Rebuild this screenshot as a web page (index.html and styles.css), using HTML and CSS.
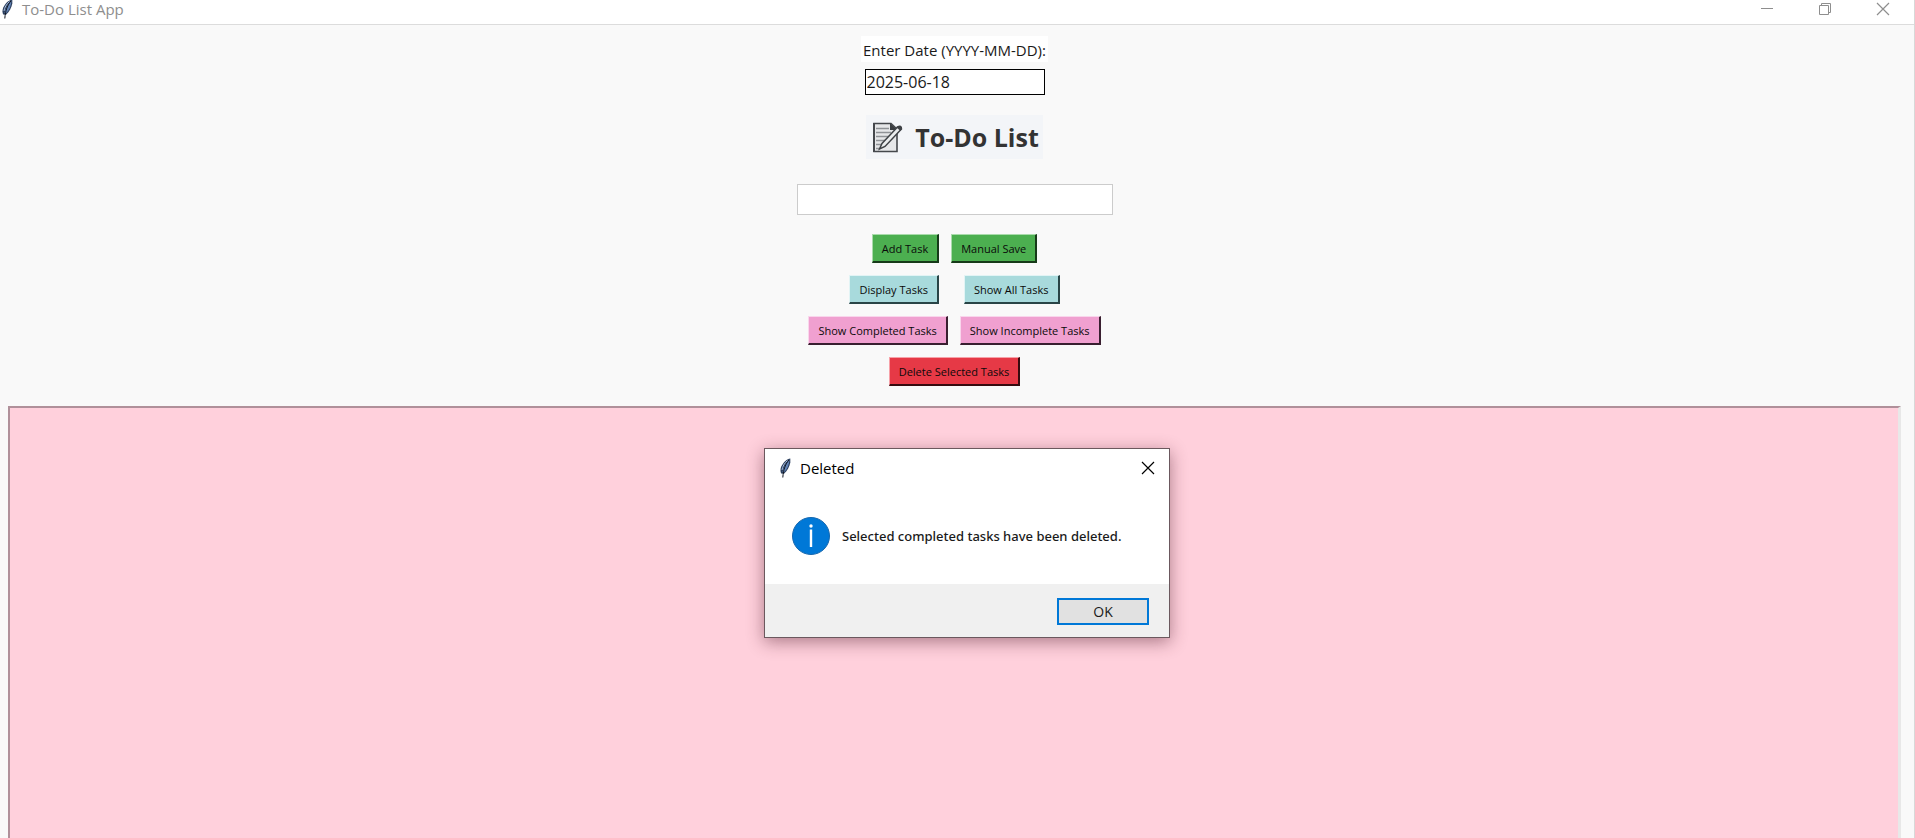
FILE: index.html
```html
<!DOCTYPE html>
<html lang="en">
<head>
<meta charset="utf-8">
<title>To-Do List App</title>
<link rel="stylesheet" href="styles.css">
</head>
<body>
<svg class="symbols" aria-hidden="true">
  <symbol id="feather" viewBox="0 0 12 20">
    <path d="M11.300.500C8 .8 4.500 4 2.300 8.500 1.200 11 1.200 13.500 2.200 15.500L5 15.700C8.500 13 10.500 8.500 11.300 4.500Z" fill="#2c3f5e"/>
    <path d="M10.500 1.500C7.500 4 5 8 3.500 14L5 14.200C8.500 11 10 7 10.500 1.500Z" fill="#6385b8"/>
    <path d="M10 2C6.500 6 4.500 11 3.800 19.500" fill="none" stroke="#10151f"/>
    <path d="M8.500 2.500C5.500 5 3.500 8.500 3 12" fill="none" stroke="#a9bddb"/>
  </symbol>
  <symbol id="cross" viewBox="0 0 14 14">
    <path d="M1 1 13 13M13 1 1 13" fill="none" stroke="currentColor" stroke-width="1.200"/>
  </symbol>
</svg>
<div class="window">
  <header class="titlebar">
    <svg class="feather"><use href="#feather"/></svg>
    <span class="titlebar-text">To-Do List App</span>
    <div class="controls">
      <button class="control" type="button" aria-label="Minimize"><svg viewBox="0 0 14 14"><path d="M1 6.500H13" fill="none" stroke="currentColor"/></svg></button>
      <button class="control" type="button" aria-label="Restore"><svg viewBox="0 0 14 14"><path d="M1.500 3.500H10.500V12.500H1.500ZM3.500 3.500V1.500H12.500V10.500H10.500" fill="none" stroke="currentColor"/></svg></button>
      <button class="control" type="button" aria-label="Close"><svg><use href="#cross"/></svg></button>
    </div>
  </header>
  <main class="content">
    <label class="date-label" for="date">Enter Date (YYYY-MM-DD):</label>
    <input class="date-input" id="date" type="text" value="2025-06-18">
    <h1 class="heading">
      <svg class="memo" viewBox="0 0 31 31" aria-hidden="true">
        <path d="M2 1.500H19L25 7V29.500H2Z" fill="#e6e7e9" stroke="#45484c" stroke-width="1.600"/>
        <path d="M2 1V30" stroke="#45484c" stroke-width="2"/>
        <path d="M18 1V8H25.500Z" fill="#3a3d41"/>
        <path d="M4 6.500H17M4 10.500H19M4 14.500H17M4 18.500H13M4 22.500H10M4 26.500H8" stroke="#8f9296" stroke-width="1.300"/>
        <path d="M7.500 27 10 21.500 25.500 5Q29.500 3 29.500 7L13 24.500Z" fill="#eceeef" stroke="#3f4246" stroke-width="1.500"/>
        <path d="M24 5 28.500 9 30 6.500Q30 4 27 4Z" fill="#3f4246"/>
      </svg>
      <span>To-Do List</span>
    </h1>
    <input class="task-input" type="text" aria-label="New task">
    <div class="actions">
      <div class="row"><button class="btn green" type="button">Add Task</button><button class="btn green" type="button">Manual Save</button></div>
      <div class="row wide"><button class="btn blue" type="button">Display Tasks</button><button class="btn blue" type="button">Show All Tasks</button></div>
      <div class="row"><button class="btn pink" type="button">Show Completed Tasks</button><button class="btn pink" type="button">Show Incomplete Tasks</button></div>
      <div class="row"><button class="btn red" type="button">Delete Selected Tasks</button></div>
    </div>
    <div class="task-list"></div>
  </main>
  <section class="dialog" role="dialog" aria-labelledby="dialog-title">
    <header class="dialog-header">
      <svg class="feather"><use href="#feather"/></svg>
      <span id="dialog-title">Deleted</span>
      <button class="dialog-close" type="button" aria-label="Close"><svg><use href="#cross"/></svg></button>
    </header>
    <div class="dialog-body">
      <svg class="info" viewBox="0 0 38 38" aria-hidden="true"><circle cx="19" cy="19" r="18.500" fill="#0078d7" stroke="#1667ae"/><circle cx="19" cy="9" r="1.700" fill="#fff"/><path d="M19 12.500V30" stroke="#fff" stroke-width="2.400"/></svg>
      <p class="message">Selected completed tasks have been deleted.</p>
    </div>
    <footer class="dialog-footer"><button class="ok" type="button">OK</button></footer>
  </section>
</div>
</body>
</html>
```
FILE: styles.css
```css
* { box-sizing: border-box; }
body {
  margin: 0;
  font-family: "Open Sans", "Noto Sans", sans-serif;
  color: #1a1a1a;
}
button, input { font-family: inherit; color: inherit; border-radius: 0; }
.symbols { position: absolute; width: 0; height: 0; }
.window {
  position: relative;
  display: flex;
  flex-direction: column;
  height: 100vh;
  overflow: hidden;
  background: #f9f9f9;
  border-right: 1px solid #d8d8d8;
}
.titlebar {
  display: flex;
  align-items: center;
  flex: none;
  height: 25px;
  padding-bottom: 6px;
  background: #fff;
  border-bottom: 1px solid #dcdcdc;
  color: #8e8e8e;
}
.feather { width: 12px; height: 20px; }
.titlebar .feather { margin: 0 9px 0 1px; }
.titlebar-text { font-size: 15px; line-height: 18px; }
.controls { display: flex; margin-left: auto; padding-right: 2px; }
.control {
  display: grid;
  place-items: center;
  width: 58px;
  height: 18px;
  padding: 0;
  border: 0;
  background: none;
}
.control svg { width: 14px; height: 14px; }
.content {
  display: flex;
  flex: 1;
  flex-direction: column;
  align-items: center;
  padding: 11px 13px 0 8px;
}
.date-label {
  padding: 3px 2px 1px;
  background: #fff;
  font-size: 15px;
  line-height: 22px;
}
.date-input {
  width: 180px;
  height: 26px;
  margin-top: 7px;
  padding: 0 1px;
  border: 1px solid #000;
  background: #fff;
  font-size: 16px;
}
.heading {
  display: flex;
  align-items: center;
  gap: 12px;
  height: 44px;
  margin: 20px 0 25px;
  padding: 0 4px 0 6px;
  background: #f3f5f8;
  color: #333;
  font-size: 25px;
  line-height: 44px;
}
.memo { width: 31px; height: 31px; }
.task-input {
  width: 316px;
  height: 31px;
  padding: 4px;
  border: 1px solid #ccc;
  background: #fff;
}
.actions {
  display: flex;
  flex-direction: column;
  align-items: center;
  gap: 12px;
  margin: 19px 0 20px;
}
.row { display: flex; gap: 12px; }
.row.wide { gap: 25px; }
.btn {
  height: 29px;
  padding: 0 9px;
  border: 1px solid;
  border-right-width: 2px;
  border-bottom-width: 2px;
  font-size: 11px;
  color: #0a0a0a;
}
.green { background: #4caf50; border-color: #a9dbab #173a19 #173a19 #a9dbab; }
.blue { background: #a8dadc; border-color: #e2f4f5 #294446 #294446 #e2f4f5; }
.pink { background: #f0a0d0; border-color: #f9d6ec #391f30 #391f30 #f9d6ec; }
.red { background: #e63946; border-color: #f7a1a8 #370b0f #370b0f #f7a1a8; }
.task-list {
  flex: 1;
  align-self: stretch;
  background: #ffd0dc;
  border: 2px solid #b0909a;
  border-right: 3px solid #e8e8e8;
  border-bottom: 0;
}
.dialog {
  position: absolute;
  top: 448px;
  left: 764px;
  width: 406px;
  background: #fff;
  border: 1px solid #6b585e;
  box-shadow: 0 4px 16px rgba(70, 20, 35, .45);
}
.dialog-header {
  display: flex;
  align-items: center;
  gap: 9px;
  height: 38px;
  padding: 0 14px;
  color: #000;
  font-size: 15px;
  line-height: 20px;
}
.dialog-close {
  display: grid;
  margin-left: auto;
  padding: 0;
  border: 0;
  background: none;
}
.dialog-close svg { width: 14px; height: 14px; }
.dialog-body {
  display: flex;
  align-items: center;
  gap: 12px;
  height: 97px;
  padding: 0 27px;
}
.info { width: 38px; height: 38px; }
.message {
  margin: 0;
  font-family: "Noto Sans", "Open Sans", sans-serif;
  font-size: 13px;
  font-weight: 500;
}
.dialog-footer {
  display: flex;
  justify-content: flex-end;
  padding: 14px 20px 12px;
  background: #f0f0f0;
}
.ok {
  width: 92px;
  height: 27px;
  padding: 0;
  border: 2px solid #0078d7;
  background: #e1e1e1;
  font-size: 14px;
}
```
